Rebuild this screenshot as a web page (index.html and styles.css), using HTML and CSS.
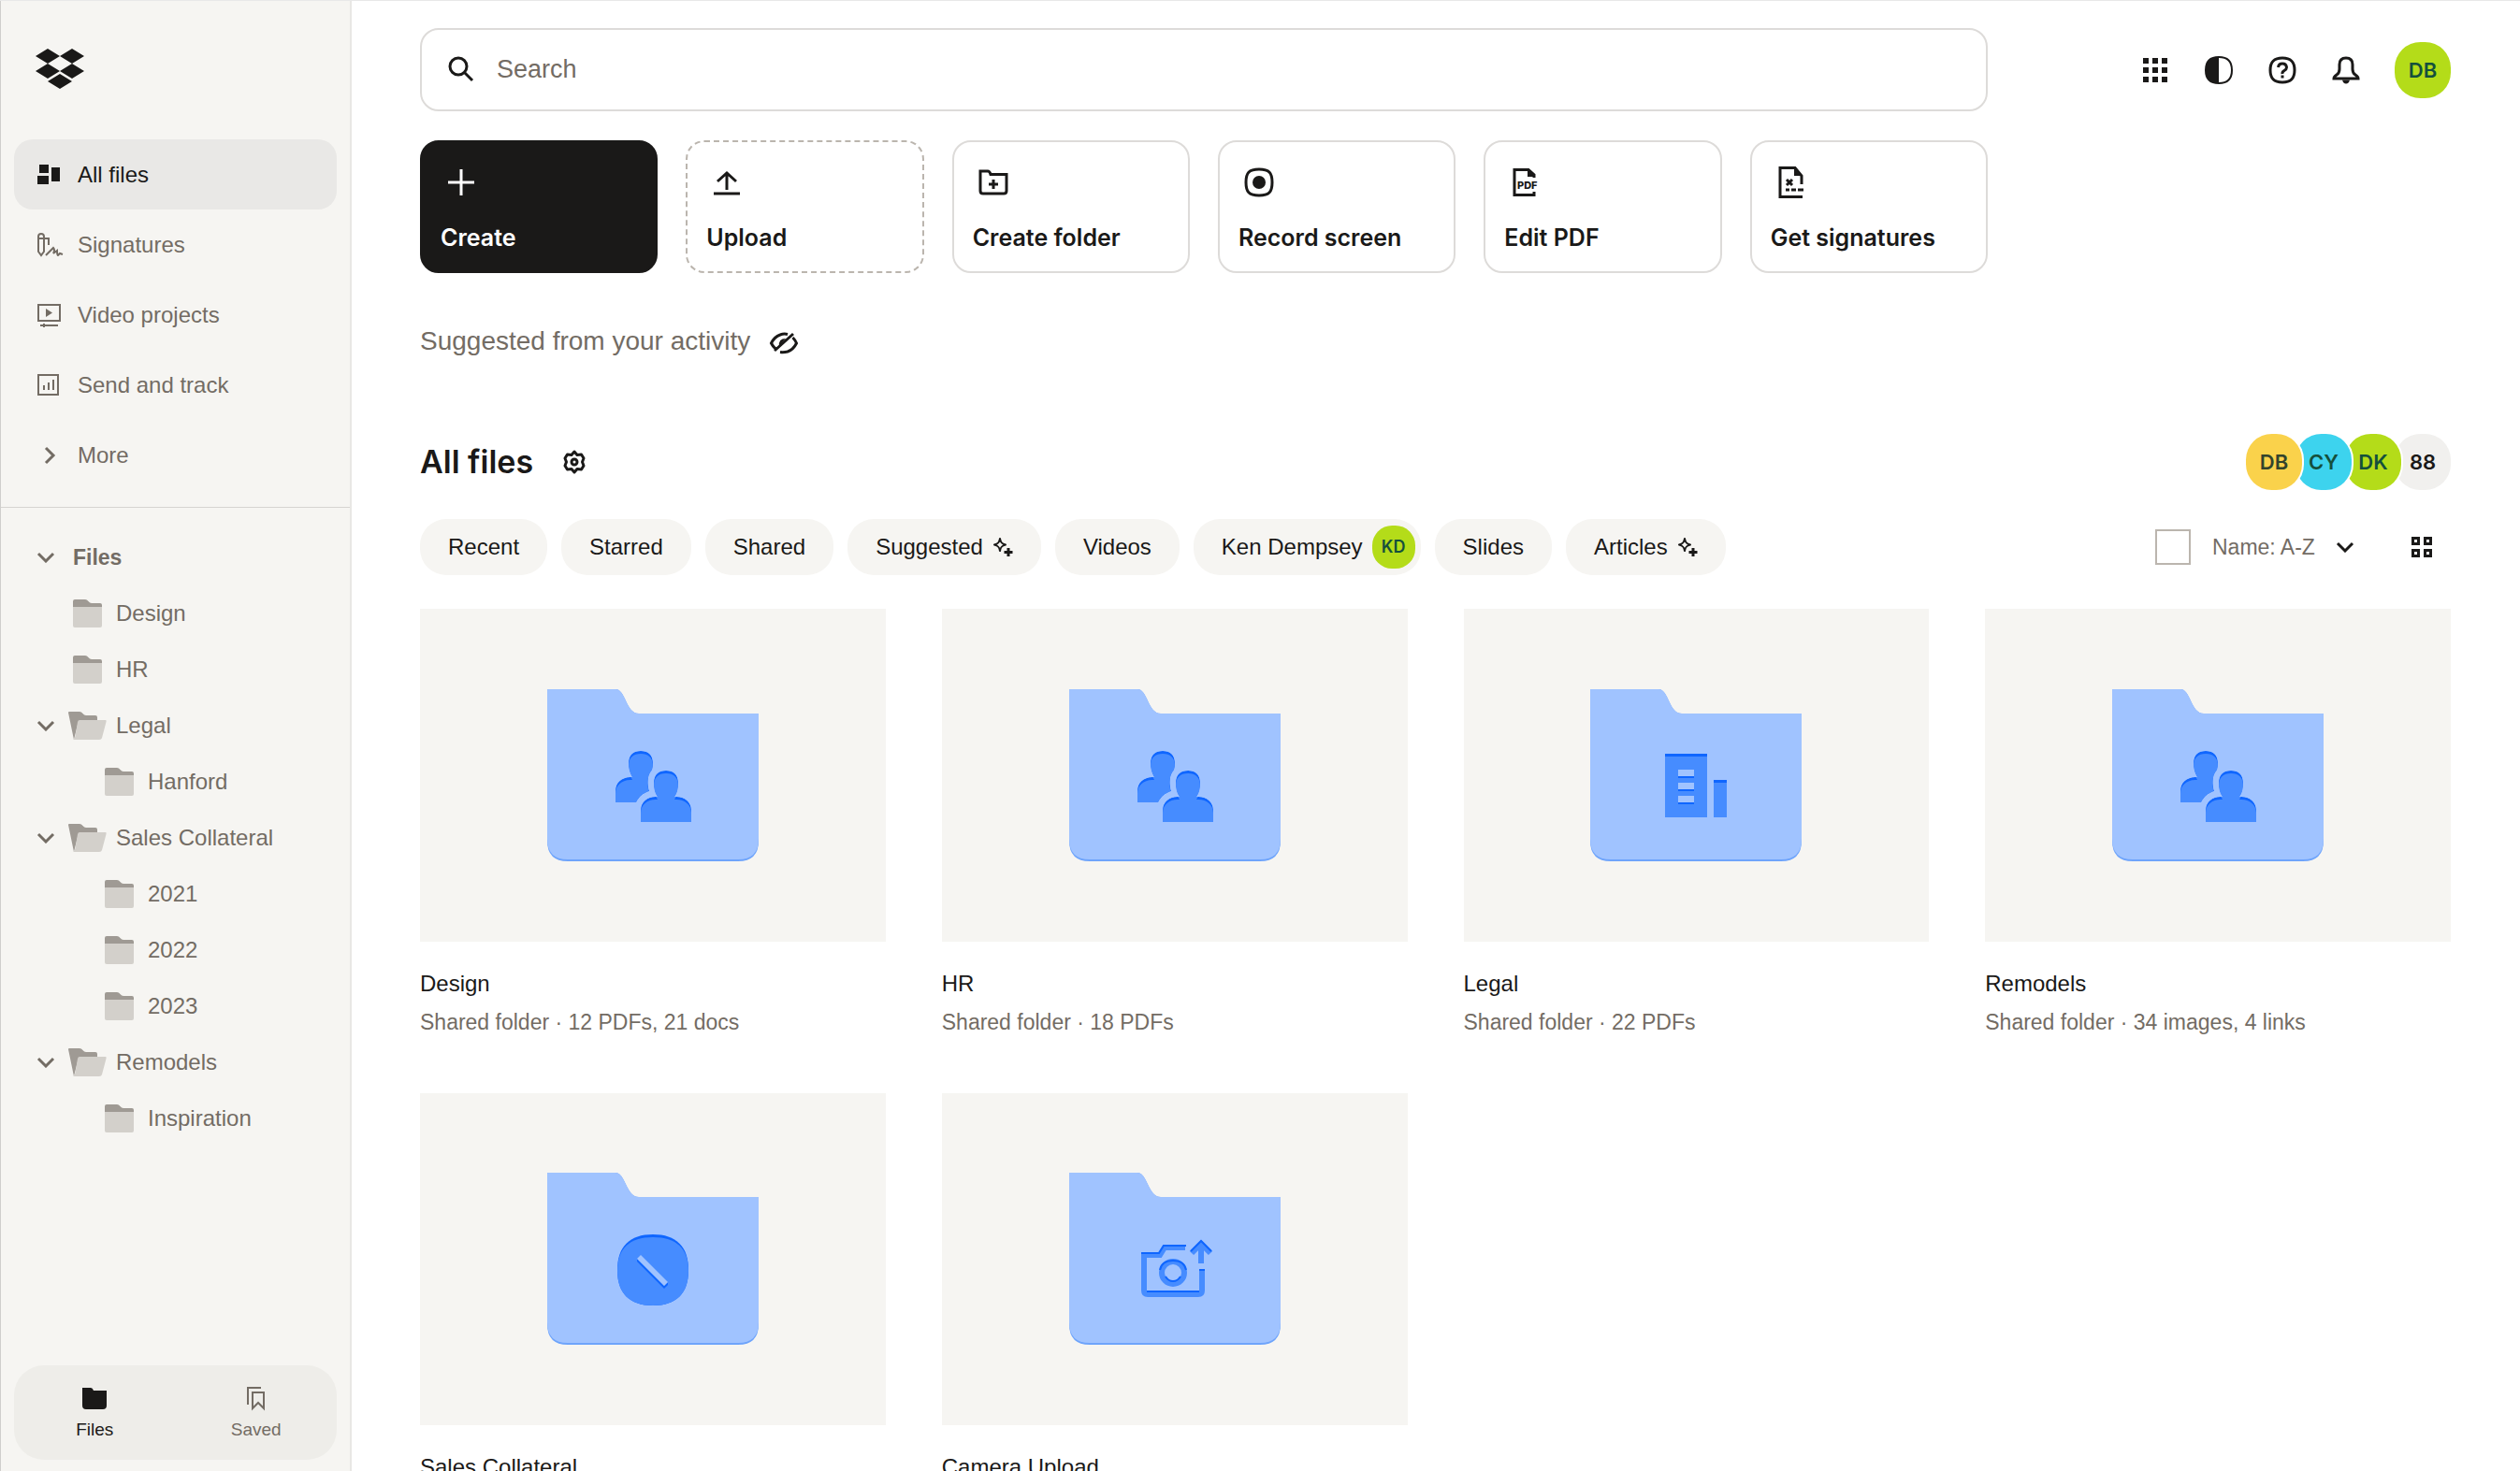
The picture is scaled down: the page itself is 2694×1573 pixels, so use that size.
FILE: index.html
```html
<!DOCTYPE html>
<html lang="en">
<head>
  <meta charset="UTF-8" />
  <meta name="viewport" content="width=device-width, initial-scale=1.0"/>
  <title>All files - Dropbox</title>
  <link rel="stylesheet" href="styles.css">
</head>
<body>

  <!-- Shared shapes -->
  <svg class="sprite" width="0" height="0" aria-hidden="true">
    <symbol id="chevron" viewBox="0 0 20 12"><path d="M2 2l8 8 8-8" fill="none" stroke="currentColor" stroke-width="3"/></symbol>
    <symbol id="sparkle" viewBox="0 0 22 22">
      <path d="M8 2C8.600 6 10 7.400 14 8.500 10 9.600 8.600 11 8 15 7.400 11 6 9.600 2 8.500 6 7.400 7.400 6 8 2z" fill="none" stroke="currentColor" stroke-width="2" stroke-linejoin="round"/>
      <path d="M17 12v9M12.500 16.500h9" fill="none" stroke="currentColor" stroke-width="3"/>
    </symbol>
    <symbol id="small-folder" viewBox="0 0 31 31">
      <path d="M0 2Q0 0 2 0H13Q15 0 16.500 2T20 4H29Q31 4 31 6V12H0z" fill="#9f9a94"/>
      <path d="M0 8H31V28Q31 30 29 30H2Q0 30 0 28z" fill="#d3d0cb"/>
    </symbol>
    <symbol id="open-folder" viewBox="0 0 41 31">
      <path d="M0 1Q0 0 1 0H12Q14 0 15.500 2T19 4H29Q31 4 31 6V12L10 14 6 30z" fill="#9f9a94"/>
      <path d="M12 9H40Q41 9 40.500 11L36 28Q35.500 30 33 30H5Q7 29 7.500 26L10 11Q10.500 9 12 9z" fill="#d3d0cb"/>
    </symbol>
    <symbol id="folder" viewBox="0 0 226 184">
      <path d="M0 0H73C84 0 84 26 98 26H226V162Q226 184 204 184H22Q0 184 0 162z" fill="#6ea4fb"/>
      <path d="M0 0H73C84 0 84 26 98 26H226V160Q226 182 204 182H22Q0 182 0 160z" fill="#a0c3ff"/>
    </symbol>
    <symbol id="people" viewBox="0 0 226 184">
      <clipPath id="people-clip">
        <path id="people-shape" d="M73 121V108C73 100 80 93 91 94C88 89 87 84 87 79C87 70 92 66 100 66C108 66 113 70 113 79C113 84 112 87 110 89C107 94 107 101 109 109C102 111 98 115 95 121zM100 142V129C100 120 108 114 118 115C115 111 114 106 114 100C114 91 119 87 127 87C135 87 140 91 140 100C140 106 139 111 136 115C146 114 154 120 154 129V142z"/>
      </clipPath>
      <g clip-path="url(#people-clip)">
        <use href="#people-shape" fill="#0f66ff"/>
        <use href="#people-shape" fill="#468cff" y="3"/>
        <path d="M93 96h14v20H93zM118 116h18v20h-18z" fill="#468cff"/>
      </g>
    </symbol>
  </svg>

  <div class="app">

    <!-- Sidebar -->
    <aside class="sidebar">
      <a href="#" class="logo" aria-label="Home">
        <svg width="52" height="44" viewBox="0 0 52 44" fill="currentColor"><path d="M13 0l13 8-13 8L0 8zM39 0l13 8-13 8-13-8zM13 16l13 8-13 8L0 24zM39 16l13 8-13 8-13-8zM26 27l13 8-13 8-13-8z"/></svg>
      </a>

      <nav class="nav">
        <a href="#" class="nav-item active">
          <svg width="36" height="36" viewBox="0 0 36 36" fill="currentColor"><path d="M8 7h10v9H8zM6 19h12v9H6zM21 10h9v15h-9z"/></svg>
          All files
        </a>
        <a href="#" class="nav-item">
          <svg width="36" height="36" viewBox="0 0 36 36" fill="none" stroke="currentColor" stroke-width="2"><path d="M7 9Q7 6 10 6T13 9V25L10 29 7 25zM7 11H18V18M15 29L23 21Q25 23 23 27L27 24Q27 29 28 29L30 27 33 28"/></svg>
          Signatures
        </a>
        <a href="#" class="nav-item">
          <svg width="36" height="36" viewBox="0 0 36 36" fill="none" stroke="currentColor" stroke-width="2"><path d="M7 7H30V24H7zM9 29H28M13 27v4"/><path d="M15 11l7 4.500-7 4.500z" fill="currentColor" stroke="none"/></svg>
          Video projects
        </a>
        <a href="#" class="nav-item">
          <svg width="36" height="36" viewBox="0 0 36 36" fill="none" stroke="currentColor" stroke-width="2"><path d="M7 7H28V28H7zM13 23V18M18 23V15M23 23V12"/></svg>
          Send and track
        </a>
        <a href="#" class="nav-item">
          <svg width="36" height="36" viewBox="0 0 36 36" fill="none" stroke="currentColor" stroke-width="3"><path d="M15 10l8 8-8 8"/></svg>
          More
        </a>
      </nav>

      <div class="tree">
        <a href="#" class="tree-item tree-title"><svg class="toggle"><use href="#chevron"/></svg>Files</a>
        <a href="#" class="tree-item level-1"><svg class="closed"><use href="#small-folder"/></svg>Design</a>
        <a href="#" class="tree-item level-1"><svg class="closed"><use href="#small-folder"/></svg>HR</a>
        <a href="#" class="tree-item"><svg class="toggle"><use href="#chevron"/></svg><svg class="open"><use href="#open-folder"/></svg>Legal</a>
        <a href="#" class="tree-item level-2"><svg class="closed"><use href="#small-folder"/></svg>Hanford</a>
        <a href="#" class="tree-item"><svg class="toggle"><use href="#chevron"/></svg><svg class="open"><use href="#open-folder"/></svg>Sales Collateral</a>
        <a href="#" class="tree-item level-2"><svg class="closed"><use href="#small-folder"/></svg>2021</a>
        <a href="#" class="tree-item level-2"><svg class="closed"><use href="#small-folder"/></svg>2022</a>
        <a href="#" class="tree-item level-2"><svg class="closed"><use href="#small-folder"/></svg>2023</a>
        <a href="#" class="tree-item"><svg class="toggle"><use href="#chevron"/></svg><svg class="open"><use href="#open-folder"/></svg>Remodels</a>
        <a href="#" class="tree-item level-2"><svg class="closed"><use href="#small-folder"/></svg>Inspiration</a>
      </div>

      <div class="switcher">
        <button type="button" class="switch active">
          <svg width="28" height="28" viewBox="0 0 28 28"><path d="M1 3H10Q12 3 13 6H27V22Q27 26 23 26H5Q1 26 1 22z" fill="currentColor"/></svg>
          Files
        </button>
        <button type="button" class="switch">
          <svg width="28" height="28" viewBox="0 0 28 28" fill="none" stroke="currentColor" stroke-width="2"><path d="M5 21V3H19M10 8H22V25L16 19 10 25z"/></svg>
          Saved
        </button>
      </div>
    </aside>

    <!-- Main content -->
    <main class="main">
      <div class="topbar">
        <div class="toolbar">
          <div class="search">
            <svg width="32" height="32" viewBox="0 0 32 32" fill="none" stroke="#1a1918" stroke-width="3"><circle cx="13" cy="13" r="9"/><path d="M20 20l8 8"/></svg>
            <input type="search" placeholder="Search" aria-label="Search">
          </div>
          <div class="actions">
            <button type="button" class="action primary">
              <svg width="44" height="44" viewBox="0 0 44 44" fill="none" stroke="currentColor" stroke-width="3"><path d="M22 8v28M8 22h28"/></svg>
              Create
            </button>
            <button type="button" class="action upload">
              <svg width="44" height="44" viewBox="0 0 44 44" fill="none" stroke="currentColor" stroke-width="3"><path d="M22 30V13M12 21l10-9 10 9M8 34h28"/></svg>
              Upload
            </button>
            <button type="button" class="action">
              <svg width="44" height="44" viewBox="0 0 44 44" fill="none" stroke="currentColor" stroke-width="3"><path d="M8 10H16Q18 10 19 13.500H36V31Q36 34 33 34H11Q8 34 8 31zM22 19v10M17 24h10"/></svg>
              Create folder
            </button>
            <button type="button" class="action">
              <svg width="44" height="44" viewBox="0 0 44 44"><path d="M22 8C33 8 36 12 36 22S33 36 22 36 8 32 8 22 11 8 22 8z" fill="none" stroke="currentColor" stroke-width="3"/><circle cx="22" cy="22" r="7" fill="currentColor"/></svg>
              Record screen
            </button>
            <button type="button" class="action">
              <svg width="44" height="44" viewBox="0 0 44 44"><path d="M32 17V14L26 8.500H11V35.500H32V32" fill="none" stroke="currentColor" stroke-width="3"/><path d="M25 7v9h8z" fill="currentColor"/><text x="14" y="29" class="pdf-text">PDF</text></svg>
              Edit PDF
            </button>
            <button type="button" class="action">
              <svg width="44" height="44" viewBox="0 0 44 44" fill="none" stroke="currentColor" stroke-width="3"><path d="M33 24V15L26 6.500H10V37.500H34M17 19l6 6M23 19l-6 6M16 30h4M22 30h5M29 30h6"/><path d="M25 6v9h8z" fill="currentColor" stroke="none"/></svg>
              Get signatures
            </button>
          </div>
        </div>

        <div class="account">
          <button type="button" class="icon-btn" aria-label="Apps">
            <svg width="32" height="32" viewBox="0 0 32 32" fill="currentColor"><path d="M3 3h6v6H3zM13 3h6v6h-6zM23 3h6v6h-6zM3 13h6v6H3zM13 13h6v6h-6zM23 13h6v6h-6zM3 23h6v6H3zM13 23h6v6h-6zM23 23h6v6h-6z"/></svg>
          </button>
          <button type="button" class="icon-btn" aria-label="Theme">
            <svg width="32" height="32" viewBox="0 0 32 32"><path d="M16 2C25 2 30 7 30 16S25 30 16 30 2 25 2 16 7 2 16 2z" fill="none" stroke="currentColor" stroke-width="2"/><path d="M16 2C7 2 2 7 2 16s5 14 14 14z" fill="currentColor"/></svg>
          </button>
          <button type="button" class="icon-btn" aria-label="Help">
            <svg width="32" height="32" viewBox="0 0 32 32" fill="none" stroke="currentColor" stroke-width="3"><path d="M16 3C25 3 29 7 29 16S25 29 16 29 3 25 3 16 7 3 16 3z"/><path d="M11.500 13Q12 9 16 9T20.500 13Q20.500 15 18 16.500T16 20M16 21.500v3"/></svg>
          </button>
          <button type="button" class="icon-btn" aria-label="Notifications">
            <svg width="32" height="32" viewBox="0 0 32 32" fill="none" stroke="currentColor" stroke-width="3"><path d="M3 25Q3 23 6 21 9 19 9 15V10Q9 3 16 3T23 10V15Q23 19 26 21 29 23 29 25z"/><path d="M12 26.500q1 4 4 4t4-4z" fill="currentColor" stroke="none"/></svg>
          </button>
          <button type="button" class="avatar lime" aria-label="Account">DB</button>
        </div>
      </div>

      <div class="suggested">
        Suggested from your activity
        <button type="button" class="icon-btn" aria-label="Hide suggestions">
          <svg width="32" height="32" viewBox="0 0 32 32" fill="none" stroke="currentColor" stroke-width="3"><path d="M6 26L26 8M20 8.500Q16 7.500 12 9 6 11 2.500 18 4 21 7 24M25.500 12Q28 14.500 29.500 18 26 25 20 27 16 28 12 27.500"/><path d="M11 21Q10 13 18 13z" fill="currentColor" stroke="none"/></svg>
        </button>
      </div>

      <div class="heading">
        <h1>All files</h1>
        <button type="button" class="icon-btn" aria-label="Settings">
          <svg width="26" height="28" viewBox="0 0 26 28" fill="none" stroke="currentColor" stroke-width="3"><path d="M13 3L16 6.500 20.500 6 23 10 21.500 14 23 18 20.500 22 16 21.500 13 25 10 21.500 5.500 22 3 18 4.500 14 3 10 5.500 6 10 6.500z" stroke-linejoin="round"/><circle cx="13" cy="14" r="3"/></svg>
        </button>
        <div class="members">
          <span class="avatar yellow">DB</span>
          <span class="avatar cyan">CY</span>
          <span class="avatar lime">DK</span>
          <span class="avatar count">88</span>
        </div>
      </div>

      <div class="filters">
        <button type="button" class="pill">Recent</button>
        <button type="button" class="pill">Starred</button>
        <button type="button" class="pill">Shared</button>
        <button type="button" class="pill">Suggested <svg width="22" height="22"><use href="#sparkle"/></svg></button>
        <button type="button" class="pill">Videos</button>
        <button type="button" class="pill person">Ken Dempsey <span class="avatar lime small">KD</span></button>
        <button type="button" class="pill">Slides</button>
        <button type="button" class="pill">Articles <svg width="22" height="22"><use href="#sparkle"/></svg></button>

        <div class="sorting">
          <input type="checkbox" class="select-all" aria-label="Select all">
          <label class="sort">
            <select aria-label="Sort by"><option>Name: A-Z</option></select>
            <svg width="20" height="12"><use href="#chevron"/></svg>
          </label>
          <button type="button" class="icon-btn" aria-label="Grid view">
            <svg width="24" height="24" viewBox="0 0 24 24" fill="none" stroke="currentColor" stroke-width="3"><path d="M2.500 2.500h6v6h-6zM15.500 2.500h6v6h-6zM2.500 15.500h6v6h-6zM15.500 15.500h6v6h-6z"/></svg>
          </button>
        </div>
      </div>

      <!-- Folders -->
      <div class="files">
        <a href="#" class="file">
          <span class="thumb"><svg width="226" height="184"><use href="#folder"/><use href="#people"/></svg></span>
          <span class="file-name">Design</span>
          <span class="file-info">Shared folder · 12 PDFs, 21 docs</span>
        </a>
        <a href="#" class="file">
          <span class="thumb"><svg width="226" height="184"><use href="#folder"/><use href="#people"/></svg></span>
          <span class="file-name">HR</span>
          <span class="file-info">Shared folder · 18 PDFs</span>
        </a>
        <a href="#" class="file">
          <span class="thumb">
            <svg width="226" height="184"><use href="#folder"/>
              <path d="M80 69h45v68H80zM132 97h14v40h-14z" fill="#468cff"/>
              <path d="M80 69h45v3H80zM132 97h14v3h-14zM94 93h17v2H94zM94 107h17v2H94zM94 121h17v2H94z" fill="#0f66ff"/>
              <path d="M94 86h17v7H94zM94 100h17v7H94zM94 114h17v7H94z" fill="#a0c3ff"/>
            </svg>
          </span>
          <span class="file-name">Legal</span>
          <span class="file-info">Shared folder · 22 PDFs</span>
        </a>
        <a href="#" class="file">
          <span class="thumb"><svg width="226" height="184"><use href="#folder"/><use href="#people"/></svg></span>
          <span class="file-name">Remodels</span>
          <span class="file-info">Shared folder · 34 images, 4 links</span>
        </a>
        <a href="#" class="file">
          <span class="thumb">
            <svg width="226" height="184"><use href="#folder"/>
              <path d="M113 66C138 66 151 79 151 104S138 142 113 142 75 129 75 104 88 66 113 66z" fill="#0f66ff"/>
              <path d="M113 69C138 69 151 81 151 105S138 142 113 142 75 129 75 105 88 69 113 69z" fill="#468cff"/>
              <path d="M96 92l29 29v3l-29-29zM125 121l4-4v3l-4 4z" fill="#0f66ff"/>
              <path d="M100 88l29 29-4 4-29-29z" fill="#a0c3ff"/>
            </svg>
          </span>
          <span class="file-name">Sales Collateral</span>
          <span class="file-info">Shared folder</span>
        </a>
        <a href="#" class="file">
          <span class="thumb">
            <svg width="226" height="184"><use href="#folder"/>
              <g fill="none" stroke-width="6">
                <path d="M124 80H102L97 88H80V126Q80 130 84 130H138Q142 130 142 126V103M141 97V76M131 86L141 76 151 86" stroke="#468cff"/>
                <circle cx="111" cy="107" r="12" stroke="#468cff"/>
              </g>
              <g fill="none" stroke="#0f66ff" stroke-width="2">
                <path d="M125 78H101L96 86H77M83 127H139M130 84L141 73 152 84M139 104h6M97 104Q99 94 111 94T125 104M103 111Q106 116 111 116T119 111"/>
              </g>
            </svg>
          </span>
          <span class="file-name">Camera Upload</span>
          <span class="file-info">Shared folder</span>
        </a>
      </div>
    </main>
  </div>

</body>
</html>
```
FILE: styles.css
```css
* {
  box-sizing: border-box;
}
body {
  font-family: "Liberation Sans", Arial, sans-serif;
  font-size: 24px;
  line-height: 28px;
  color: #1a1918;
  background: #fff;
  margin: 0;
}
a {
  color: inherit;
  text-decoration: none;
}
button {
  font: inherit;
  color: inherit;
  background: none;
  border: none;
  padding: 0;
  cursor: pointer;
}
svg {
  display: block;
  flex-shrink: 0;
}
.sprite {
  position: absolute;
}
.app {
  display: flex;
  height: 100vh;
  border-top: 1px solid #e8e8e8;
}

/* Sidebar */
.sidebar {
  width: 376px;
  flex-shrink: 0;
  display: flex;
  flex-direction: column;
  padding-bottom: 12px;
  background: #f6f5f2;
  border-left: 1px solid #cfcecc;
  border-right: 2px solid #e8e7e4;
  color: #736c64;
}
.logo {
  margin: 51px 37px 53px;
  width: 52px;
  color: #1a1918;
}
.nav {
  padding: 0 14px 18px;
  border-bottom: 1px solid #d6d4d1;
}
.nav-item {
  display: flex;
  align-items: center;
  gap: 13px;
  height: 75px;
  padding-left: 19px;
  border-radius: 20px;
}
.nav-item.active {
  background: #e9e8e6;
  color: #1a1918;
}
.tree {
  padding: 23px 0 0 38px;
}
.tree-item {
  display: flex;
  align-items: center;
  height: 60px;
}
.tree-title {
  font-size: 23px;
  font-weight: bold;
  gap: 6px;
}
.level-1 {
  padding-left: 39px;
}
.level-2 {
  padding-left: 73px;
}
.toggle {
  width: 20px;
  height: 12px;
  margin-right: 14px;
}
.tree-title .toggle {
  margin-right: 13px;
}
.closed {
  width: 31px;
  height: 31px;
  margin-right: 15px;
}
.open {
  width: 41px;
  height: 31px;
  margin-right: 10px;
}
.switcher {
  display: flex;
  height: 101px;
  margin: auto 14px 0;
  background: #eeede9;
  border-radius: 32px;
}
.switch {
  flex: 1;
  display: flex;
  flex-direction: column;
  align-items: center;
  justify-content: center;
  gap: 6px;
  padding-top: 2px;
  font-size: 19px;
}
.switch.active {
  color: #1a1918;
}

/* Main */
.main {
  flex: 1;
  min-width: 0;
  padding: 29px 74px 0 73px;
  overflow-y: auto;
  scrollbar-width: none;
}
.topbar {
  display: flex;
  justify-content: space-between;
  align-items: flex-start;
  gap: 40px;
}
.toolbar {
  flex: 1;
  max-width: 1676px;
}
.search {
  display: flex;
  align-items: center;
  gap: 22px;
  height: 89px;
  padding: 0 26px 2px;
  border: 2px solid #dddbd9;
  border-radius: 20px;
}
.search input {
  flex: 1;
  font: inherit;
  font-size: 27px;
  border: none;
  outline: none;
  padding: 0;
}
.search input::placeholder {
  color: #736c64;
}
.actions {
  display: grid;
  grid-template-columns: repeat(6, 1fr);
  gap: 30px;
  margin-top: 31px;
}
.action {
  display: flex;
  flex-direction: column;
  align-items: flex-start;
  justify-content: space-between;
  height: 142px;
  padding: 21px 20px 22px;
  border: 2px solid #dddbd9;
  border-radius: 20px;
  font-family: Inter, "Liberation Sans", sans-serif;
  font-size: 25px;
  font-weight: 600;
  white-space: nowrap;
}
.action.primary {
  background: #1a1918;
  border-color: #1a1918;
  color: #fff;
}
.action.upload {
  border: 2px dashed #bbb5ae;
}
.pdf-text {
  font-family: Inter, sans-serif;
  font-size: 11px;
  font-weight: 800;
  fill: currentColor;
}
.account {
  display: flex;
  align-items: center;
  gap: 36px;
  height: 89px;
}
.icon-btn {
  display: flex;
  color: #1a1918;
}
.avatar {
  display: flex;
  align-items: center;
  justify-content: center;
  width: 60px;
  height: 60px;
  border-radius: 46%;
  font-family: Inter, "Liberation Sans", sans-serif;
  font-size: 22px;
  font-weight: 600;
  color: #14503c;
}
.lime {
  background: #b4dc19;
}
.yellow {
  background: #fad24b;
  color: #33432c;
}
.cyan {
  background: #3dd3ee;
}
.count {
  background: #f1f0ee;
  color: #1a1918;
}
.small {
  width: 46px;
  height: 46px;
  font-size: 18px;
}
.suggested {
  display: flex;
  align-items: center;
  gap: 20px;
  margin-top: 56px;
  font-size: 28px;
  line-height: 34px;
  color: #736c64;
}
.heading {
  display: flex;
  align-items: center;
  gap: 31px;
  margin: 82px 0 31px;
}
.heading h1 {
  margin: 0;
  font-family: Inter, "Liberation Sans", sans-serif;
  font-size: 34px;
  line-height: 40px;
  font-weight: 600;
}
.members {
  display: flex;
  margin-left: auto;
}
.members .avatar + .avatar {
  margin-left: -7px;
}
.members .avatar {
  position: relative;
  box-shadow: 0 0 0 2px #fff;
}
.members .avatar:nth-child(1) {
  z-index: 3;
}
.members .avatar:nth-child(2) {
  z-index: 2;
}
.members .avatar:nth-child(3) {
  z-index: 1;
}
.filters {
  display: flex;
  gap: 15px;
  margin-bottom: 36px;
}
.pill {
  display: flex;
  align-items: center;
  gap: 10px;
  height: 60px;
  padding: 0 30px;
  border-radius: 28px;
  background: #f6f5f2;
  white-space: nowrap;
}
.pill.person {
  padding-right: 6px;
}
.sorting {
  display: flex;
  align-items: center;
  margin-left: auto;
  padding-right: 19px;
}
.select-all {
  appearance: none;
  width: 38px;
  height: 38px;
  margin: 0 23px 0 0;
  border: 2px solid #bbb5ae;
}
.sort {
  display: flex;
  align-items: center;
  gap: 20px;
  margin-right: 60px;
}
.sort select {
  appearance: none;
  font: inherit;
  font-size: 23px;
  color: #736c64;
  background: none;
  border: none;
  padding: 0;
}

/* Files grid */
.files {
  display: grid;
  grid-template-columns: repeat(4, 1fr);
  gap: 62px 60px;
}
.file {
  display: flex;
  flex-direction: column;
}
.thumb {
  display: flex;
  align-items: center;
  justify-content: center;
  aspect-ratio: 7 / 5;
  margin-bottom: 31px;
  background: #f6f5f2;
}
.file-name {
  margin-bottom: 13px;
}
.file-info {
  font-size: 23px;
  color: #736c64;
}
```
